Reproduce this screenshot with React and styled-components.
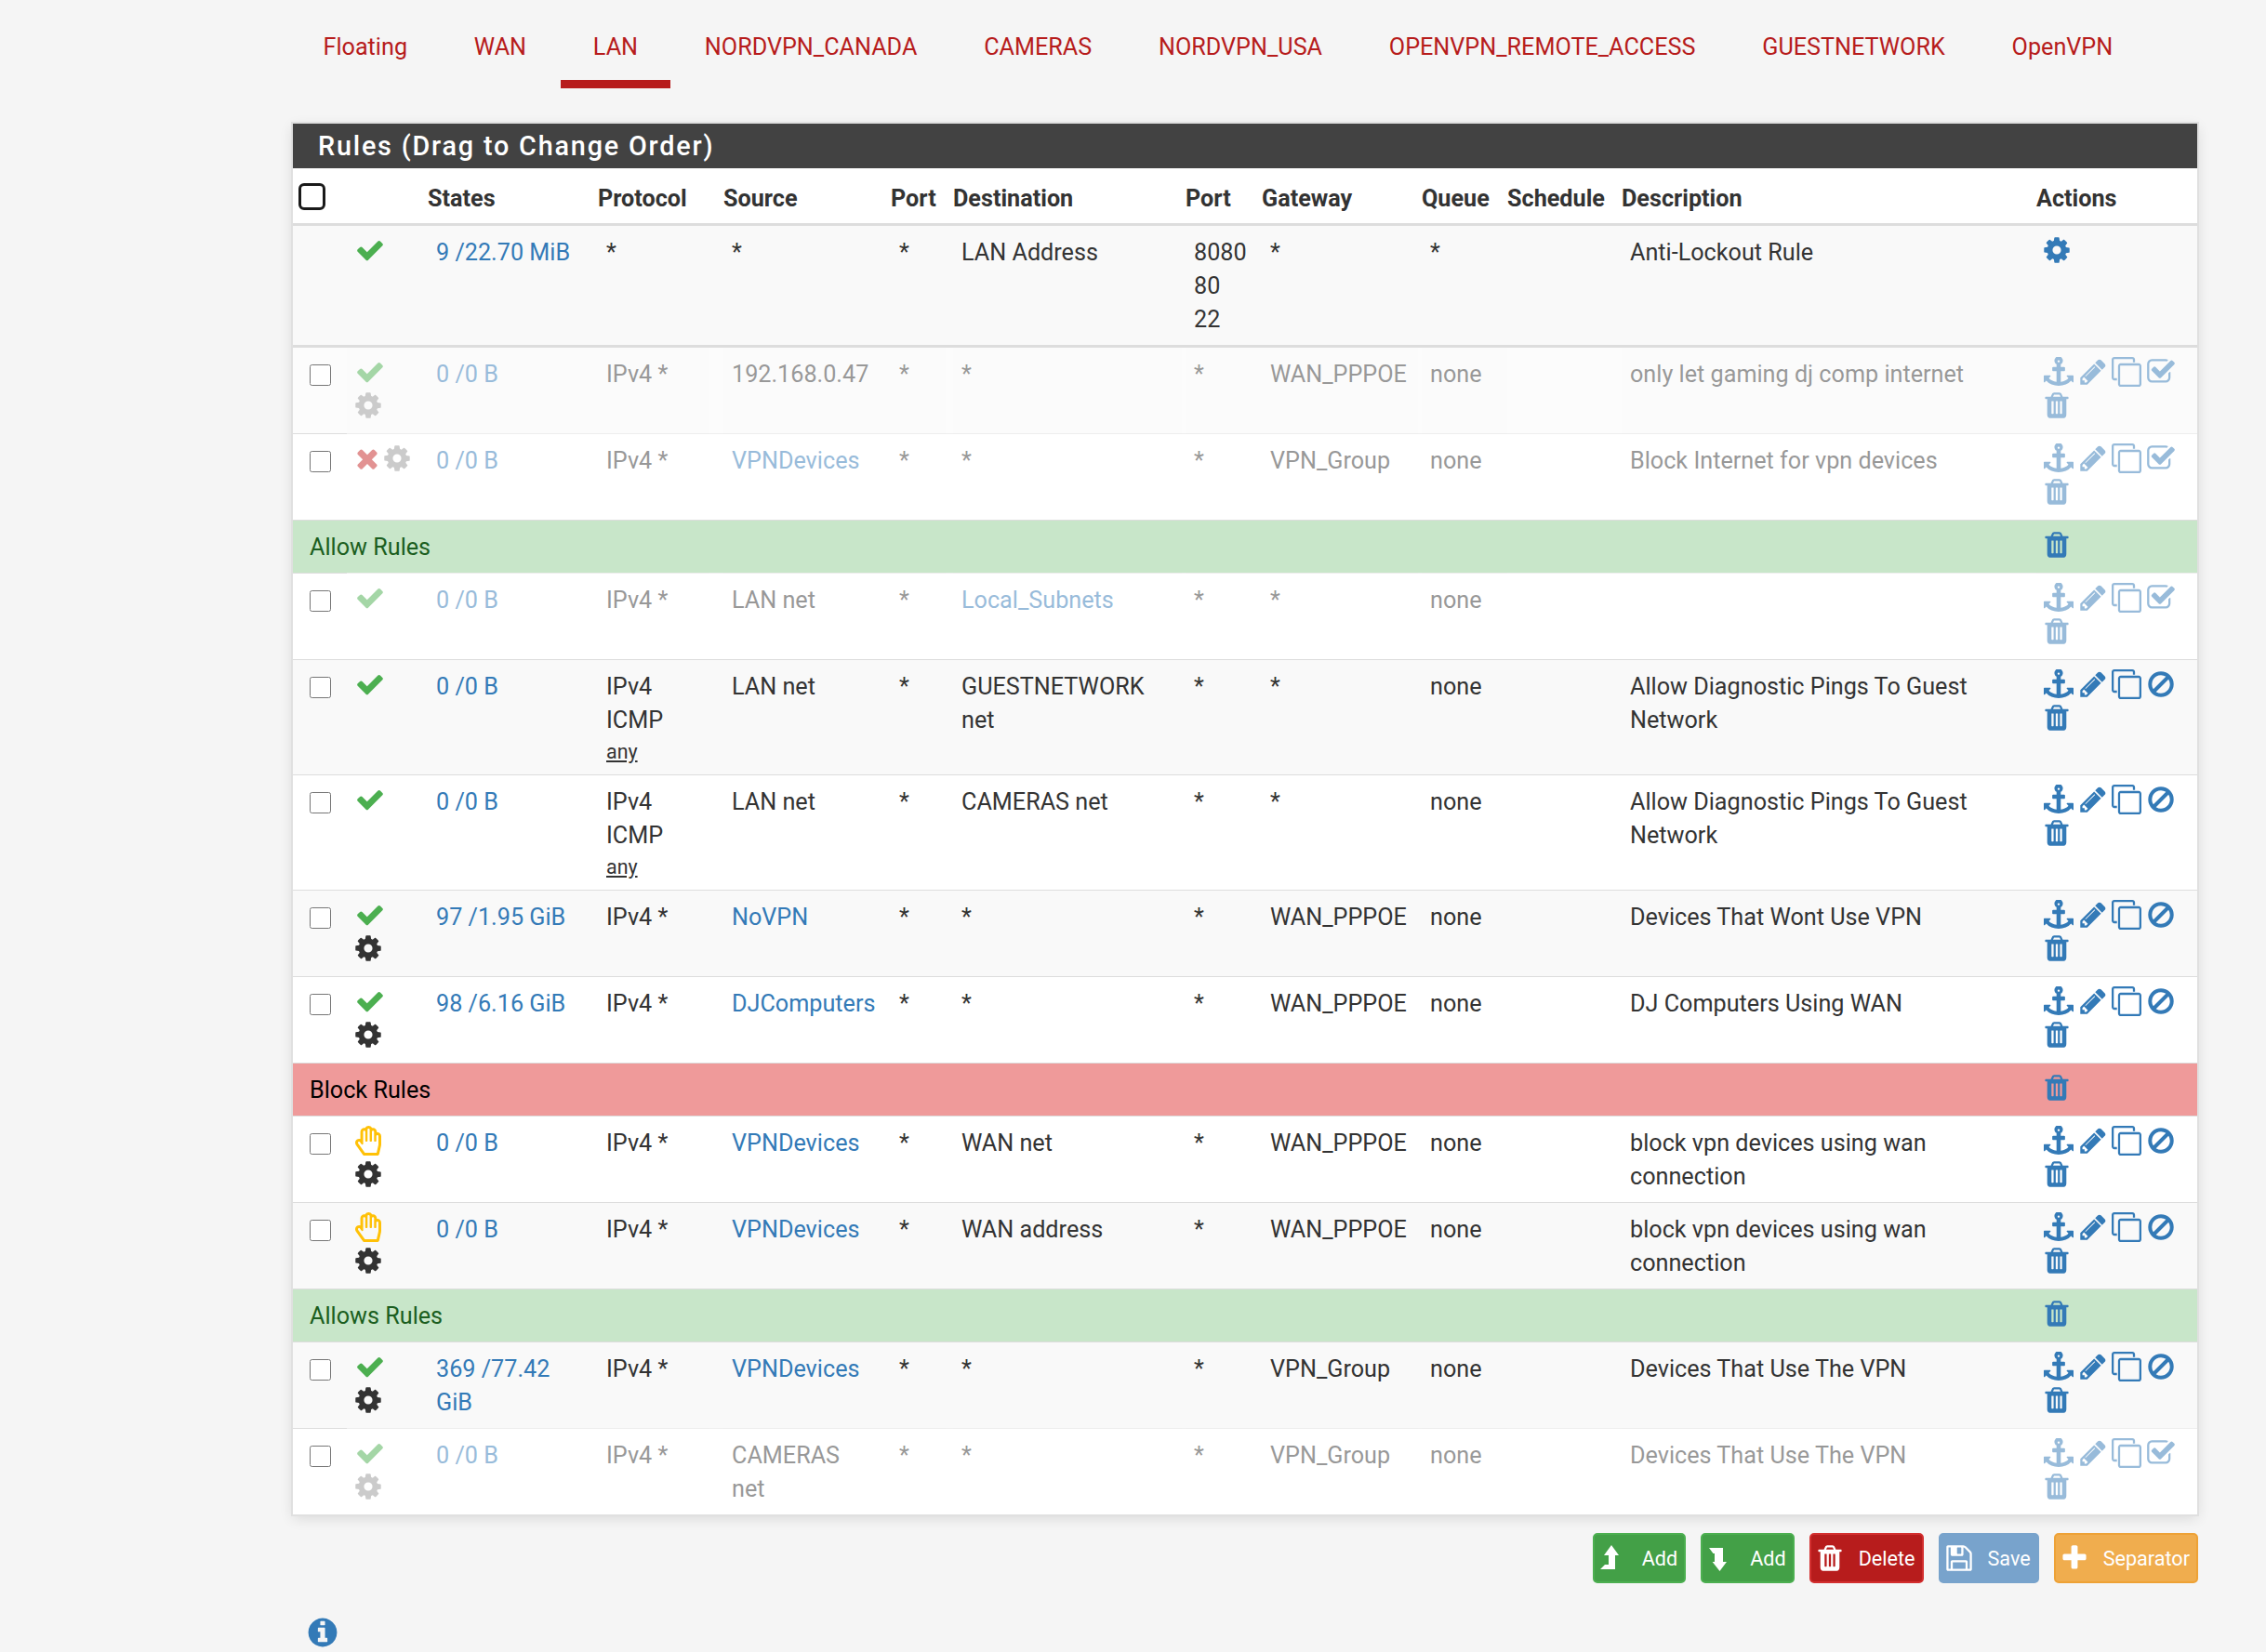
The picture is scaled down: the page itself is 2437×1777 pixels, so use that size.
import styled, { createGlobalStyle, css } from 'styled-components';
import { FaRegHandPaper } from 'react-icons/fa';

// Font Awesome 4 outlines, the ones the firewall page uses
const PATHS = {
  check: 'M1671 566q0 40-28 68l-724 724-136 136q-28 28-68 28t-68-28l-136-136-362-362q-28-28-28-68t28-68l136-136q28-28 68-28t68 28l294 295 656-657q28-28 68-28t68 28l136 136q28 28 28 68z',
  times: 'M1490 1322q0 40-28 68l-136 136q-28 28-68 28t-68-28l-294-294-294 294q-28 28-68 28t-68-28l-136-136q-28-28-28-68t28-68l294-294-294-294q-28-28-28-68t28-68l136-136q28-28 68-28t68 28l294 294 294-294q28-28 68-28t68 28l136 136q28 28 28 68t-28 68l-294 294 294 294q28 28 28 68z',
  cog: 'M1152 896q0-106-75-181t-181-75-181 75-75 181 75 181 181 75 181-75 75-181zm512-109v222q0 12-8 23t-20 13l-185 28q-19 54-39 91 35 50 107 138 10 12 10 25t-9 23q-27 37-99 108t-94 71q-12 0-26-9l-138-108q-44 23-91 38-16 136-29 186-7 28-36 28h-222q-14 0-24.5-8.5t-11.5-21.5l-28-184q-49-16-90-37l-141 107q-10 9-25 9-14 0-25-11-126-114-165-168-7-10-7-23 0-12 8-23 15-21 51-66.5t54-70.5q-27-50-41-99l-183-27q-13-2-21-12.5t-8-23.5v-222q0-12 8-23t19-13l186-28q14-46 39-92-40-57-107-138-10-12-10-24 0-10 9-23 26-36 98.5-107.5t94.5-71.5q13 0 26 10l138 107q44-23 91-38 16-136 29-186 7-28 36-28h222q14 0 24.5 8.5t11.5 21.5l28 184q49 16 90 37l142-107q9-9 24-9 13 0 25 10 129 119 165 170 7 8 7 22 0 12-8 23-15 21-51 66.5t-54 70.5q26 50 41 98l183 28q13 2 21 12.5t8 23.5z',
  trash: 'M704 1376v-704q0-14-9-23t-23-9h-64q-14 0-23 9t-9 23v704q0 14 9 23t23 9h64q14 0 23-9t9-23zm256 0v-704q0-14-9-23t-23-9h-64q-14 0-23 9t-9 23v704q0 14 9 23t23 9h64q14 0 23-9t9-23zm256 0v-704q0-14-9-23t-23-9h-64q-14 0-23 9t-9 23v704q0 14 9 23t23 9h64q14 0 23-9t9-23zm-544-992h448l-48-117q-7-9-17-11h-317q-10 2-17 11zm928 32v64q0 14-9 23t-23 9h-96v948q0 83-47 143.5t-113 60.5h-832q-66 0-113-58.5t-47-141.5v-952h-96q-14 0-23-9t-9-23v-64q0-14 9-23t23-9h309l70-167q15-37 54-63t79-26h320q40 0 79 26t54 63l70 167h309q14 0 23 9t9 23z',
  anchor: 'M960 256q0-26-19-45t-45-19-45 19-19 45 19 45 45 19 45-19 19-45zm832 888v352q0 22-20 30-8 2-12 2-12 0-23-9l-93-93q-119 143-318.5 226.5t-429.5 83.5-429.5-83.5-318.5-226.5l-93 93q-9 9-23 9-4 0-12-2-20-8-20-30v-352q0-14 9-23t23-9h352q22 0 30 20 8 19-7 35l-100 100q67 91 189.5 153.5t271.5 82.5v-647h-192q-26 0-45-19t-19-45v-128q0-26 19-45t45-19h192v-163q-58-34-93-92.5t-35-128.5q0-106 75-181t181-75 181 75 75 181q0 70-35 128.5t-93 92.5v163h192q26 0 45 19t19 45v128q0 26-19 45t-45 19h-192v647q149-20 271.5-82.5t189.5-153.5l-100-100q-15-16-7-35 8-20 30-20h352q14 0 23 9t9 23z',
  pencil: 'M491 1536l91-91-235-235-91 91v107h128v128h107zm523-928q0-22-22-22-10 0-17 7l-542 542q-7 7-7 17 0 22 22 22 10 0 17-7l542-542q7-7 7-17zm-54-192l416 416-832 832h-416v-416zm683 96q0 53-37 90l-166 166-416-416 166-165q36-38 90-38 53 0 91 38l235 234q37 39 37 91z',
  clone: 'M1664 1632v-1088q0-13-9.5-22.5t-22.5-9.5h-1088q-13 0-22.5 9.5t-9.5 22.5v1088q0 13 9.5 22.5t22.5 9.5h1088q13 0 22.5-9.5t9.5-22.5zm128-1088v1088q0 66-47 113t-113 47h-1088q-66 0-113-47t-47-113v-1088q0-66 47-113t113-47h1088q66 0 113 47t47 113zm-384-384v160h-128v-160q0-13-9.5-22.5t-22.5-9.5h-1088q-13 0-22.5 9.5t-9.5 22.5v1088q0 13 9.5 22.5t22.5 9.5h160v128h-160q-66 0-113-47t-47-113v-1088q0-66 47-113t113-47h1088q66 0 113 47t47 113z',
  enable: 'M1472 930v318q0 119-84.5 203.5t-203.5 84.5h-832q-119 0-203.5-84.5t-84.5-203.5v-832q0-119 84.5-203.5t203.5-84.5h832q63 0 117 25 15 7 18 23 3 17-9 29l-49 49q-10 10-23 10-3 0-9-2-23-6-45-6h-832q-66 0-113 47t-47 113v832q0 66 47 113t113 47h832q66 0 113-47t47-113v-254q0-13 9-22l64-64q10-10 23-10 6 0 12 3 20 8 20 29zm231-489l-814 814q-24 24-57 24t-57-24l-430-430q-24-24-24-57t24-57l110-110q24-24 57-24t57 24l263 263 647-647q24-24 57-24t57 24l110 110q24 24 24 57t-24 57z',
  ban: 'M1440 893q0-161-87-295l-754 753q137 89 297 89 111 0 211.5-43.5t173.5-116.5 116-174.5 43-212.5zm-999 299l755-754q-135-91-300-91-148 0-273 73t-198 199-73 274q0 162 89 299zm1223-299q0 157-61 300t-163.5 246-245 164-298.5 61-298.5-61-245-164-163.5-246-61-300 61-299.5 163.5-245.5 245-164 298.5-61 298.5 61 245 164 163.5 245.5 61 299.5z',
  save: 'M512 1536h768v-384h-768v384zm896 0h128v-896q0-14-10-38.5t-20-34.5l-281-281q-10-10-34-20t-39-10v416q0 40-28 68t-68 28h-576q-40 0-68-28t-28-68v-416h-128v1280h128v-416q0-40 28-68t68-28h832q40 0 68 28t28 68v416zm-384-928v-320q0-13-9.5-22.5t-22.5-9.5h-192q-13 0-22.5 9.5t-9.5 22.5v320q0 13 9.5 22.5t22.5 9.5h192q13 0 22.5-9.5t9.5-22.5zm640 32v928q0 40-28 68t-68 28h-1344q-40 0-68-28t-28-68v-1344q0-40 28-68t68-28h928q40 0 88 20t76 48l280 280q28 28 48 76t20 88z',
  plus: 'M1600 736v192q0 40-28 68t-68 28h-416v416q0 40-28 68t-68 28h-192q-40 0-68-28t-28-68v-416h-416q-40 0-68-28t-28-68v-192q0-40 28-68t68-28h416v-416q0-40 28-68t68-28h192q40 0 68 28t28 68v416h416q40 0 68 28t28 68z',
  info: 'M1152 1376v-160q0-14-9-23t-23-9h-96v-512q0-14-9-23t-23-9h-320q-14 0-23 9t-9 23v160q0 14 9 23t23 9h96v320h-96q-14 0-23 9t-9 23v160q0 14 9 23t23 9h448q14 0 23-9t9-23zm-128-896v-160q0-14-9-23t-23-9h-192q-14 0-23 9t-9 23v160q0 14 9 23t23 9h192q14 0 23-9t9-23zm640 416q0 209-103 385.5t-279.5 279.5-385.5 103-385.5-103-279.5-279.5-103-385.5 103-385.5 279.5-279.5 385.5-103 385.5 103 279.5 279.5 103 385.5z',
  levelUp: 'M784 112 L1232 728 H1008 V1568 H112 L392 1288 H616 V728 H336 Z',
  levelDown: 'M812 1680 L1230 1120 H1008 V280 H168 L420 616 H504 V1120 H370 Z',
};

function Icon({ name, className }) {
  return (
    <svg className={className} viewBox="0 0 1792 1792" width="32" height="32" aria-hidden="true">
      <path d={PATHS[name]} fill="currentColor" />
    </svg>
  );
}

const TABS = ['Floating', 'WAN', 'LAN', 'NORDVPN_CANADA', 'CAMERAS', 'NORDVPN_USA', 'OPENVPN_REMOTE_ACCESS', 'GUESTNETWORK', 'OpenVPN'];

const HEADINGS = ['', '', 'States', 'Protocol', 'Source', 'Port', 'Destination', 'Port', 'Gateway', 'Queue', 'Schedule', 'Description', 'Actions'];
const COL_WIDTHS = [58, 87, 183, 135, 180, 67, 250, 82, 172, 92, 123, 446, 173];

const ICMP = { icmp: true };

const RULES = [
  { off: true, status: 'check', gear: true, states: '0 /0 B', proto: 'IPv4 *', source: '192.168.0.47', dest: '*', gateway: 'WAN_PPPOE', desc: 'only let gaming dj comp internet' },
  { off: true, status: 'times', gear: true, states: '0 /0 B', proto: 'IPv4 *', source: 'VPNDevices', sourceLink: true, dest: '*', gateway: 'VPN_Group', desc: 'Block Internet for vpn devices' },
  { section: 'Allow Rules', tone: 'allow' },
  { off: true, status: 'check', states: '0 /0 B', proto: 'IPv4 *', source: 'LAN net', dest: 'Local_Subnets', destLink: true, gateway: '*', desc: '' },
  { ...ICMP, status: 'check', states: '0 /0 B', source: 'LAN net', dest: 'GUESTNETWORK net', gateway: '*', desc: 'Allow Diagnostic Pings To Guest Network' },
  { ...ICMP, status: 'check', states: '0 /0 B', source: 'LAN net', dest: 'CAMERAS net', gateway: '*', desc: 'Allow Diagnostic Pings To Guest Network' },
  { status: 'check', gear: true, states: '97 /1.95 GiB', proto: 'IPv4 *', source: 'NoVPN', sourceLink: true, dest: '*', gateway: 'WAN_PPPOE', desc: 'Devices That Wont Use VPN' },
  { status: 'check', gear: true, states: '98 /6.16 GiB', proto: 'IPv4 *', source: 'DJComputers', sourceLink: true, dest: '*', gateway: 'WAN_PPPOE', desc: 'DJ Computers Using WAN' },
  { section: 'Block Rules', tone: 'block' },
  { status: 'hand', gear: true, states: '0 /0 B', proto: 'IPv4 *', source: 'VPNDevices', sourceLink: true, dest: 'WAN net', gateway: 'WAN_PPPOE', desc: 'block vpn devices using wan connection' },
  { status: 'hand', gear: true, states: '0 /0 B', proto: 'IPv4 *', source: 'VPNDevices', sourceLink: true, dest: 'WAN address', gateway: 'WAN_PPPOE', desc: 'block vpn devices using wan connection' },
  { section: 'Allows Rules', tone: 'allow' },
  { status: 'check', gear: true, states: '369 /77.42 GiB', proto: 'IPv4 *', source: 'VPNDevices', sourceLink: true, dest: '*', gateway: 'VPN_Group', desc: 'Devices That Use The VPN' },
  { off: true, status: 'check', gear: true, states: '0 /0 B', proto: 'IPv4 *', source: 'CAMERAS net', dest: '*', gateway: 'VPN_Group', desc: 'Devices That Use The VPN' },
];

function StatusIcons({ rule }) {
  return (
    <IconFlow>
      {rule.status === 'check' && <CheckIcon name="check" />}
      {rule.status === 'times' && <TimesIcon name="times" />}
      {rule.status === 'hand' && <HandIcon />}
      {rule.gear && <GearIcon name="cog" $muted={rule.off} />}
    </IconFlow>
  );
}

function RuleActions({ off }) {
  return (
    <IconFlow>
      <ActionIcon name="anchor" />
      <ActionIcon name="pencil" />
      <ActionIcon name="clone" />
      <ActionIcon name={off ? 'enable' : 'ban'} />
      <NudgedIcon name="trash" />
    </IconFlow>
  );
}

function RuleRow({ rule }) {
  if (rule.section) {
    return (
      <Row>
        <SectionCell colSpan={12} $tone={rule.tone}>{rule.section}</SectionCell>
        <SectionCell $tone={rule.tone} $action>
          <IconFlow>
            <NudgedIcon name="trash" />
          </IconFlow>
        </SectionCell>
      </Row>
    );
  }
  return (
    <Row $off={rule.off}>
      <Cell>
        <RowCheck type="checkbox" />
      </Cell>
      <Cell><StatusIcons rule={rule} /></Cell>
      <Cell><TextLink href="#states">{rule.states}</TextLink></Cell>
      <Cell>
        {rule.icmp ? (
          <>
            IPv4<br />ICMP
            <IcmpType>any</IcmpType>
          </>
        ) : rule.proto}
      </Cell>
      <SourceCell>{rule.sourceLink ? <TextLink href="#source">{rule.source}</TextLink> : rule.source}</SourceCell>
      <Cell>*</Cell>
      <Cell>{rule.destLink ? <TextLink href="#dest">{rule.dest}</TextLink> : rule.dest}</Cell>
      <Cell>*</Cell>
      <Cell>{rule.gateway}</Cell>
      <Cell>none</Cell>
      <Cell />
      <Cell>{rule.desc}</Cell>
      <ActionCell><RuleActions off={rule.off} /></ActionCell>
    </Row>
  );
}

export default function App() {
  return (
    <>
      <GlobalStyle />
      <TabList>
        {TABS.map((tab) => (
          <Tab key={tab} $active={tab === 'LAN'}>
            <TabLink href="#tab">{tab}</TabLink>
          </Tab>
        ))}
      </TabList>
      <Main>
        <Panel>
          <PanelHeading>Rules (Drag to Change Order)</PanelHeading>
          <RulesTable>
            <colgroup>
              {COL_WIDTHS.map((w, i) => <col key={i} width={w} />)}
            </colgroup>
            <thead>
              <tr>
                <HeadCell><HeadCheck type="checkbox" /></HeadCell>
                {HEADINGS.slice(1).map((h, i) => <HeadCell key={i}>{h}</HeadCell>)}
              </tr>
            </thead>
            <tbody>
              <LockoutRow>
                <Cell />
                <Cell><IconFlow><CheckIcon name="check" /></IconFlow></Cell>
                <Cell><TextLink href="#states">9 /22.70 MiB</TextLink></Cell>
                <Cell>*</Cell>
                <Cell>*</Cell>
                <Cell>*</Cell>
                <Cell>LAN Address</Cell>
                <Cell>8080<br />80<br />22</Cell>
                <Cell>*</Cell>
                <Cell>*</Cell>
                <Cell />
                <Cell>Anti-Lockout Rule</Cell>
                <ActionCell><IconFlow><NudgedIcon name="cog" /></IconFlow></ActionCell>
              </LockoutRow>
            </tbody>
            <RuleBody>
              {RULES.map((rule, i) => <RuleRow key={i} rule={rule} />)}
            </RuleBody>
          </RulesTable>
        </Panel>
        <ButtonBar>
          <Button $tone="green"><Icon name="levelUp" />Add</Button>
          <Button $tone="green"><Icon name="levelDown" />Add</Button>
          <Button $tone="red"><Icon name="trash" />Delete</Button>
          <Button $tone="blue"><Icon name="save" />Save</Button>
          <Button $tone="orange"><Icon name="plus" />Separator</Button>
        </ButtonBar>
        <InfoIcon name="info" />
      </Main>
    </>
  );
}

const GlobalStyle = createGlobalStyle`
  body {
    margin: 0;
    background: #f5f5f5;
    color: #333;
    font-family: Roboto, "Liberation Sans", sans-serif;
    font-size: 25.2px;
    line-height: 36px;
  }
`;

const TabList = styled.ul`
  display: flex;
  list-style: none;
  margin: 0;
  padding: 0 0 0 313px;
`;

const Tab = styled.li`
  padding: 33px 34.5px 17px;
  margin-right: 2.8px;
  border-bottom: 9px solid ${(p) => (p.$active ? '#b71c1c' : 'transparent')};
`;

const TabLink = styled.a`
  color: #b71c1c;
  text-decoration: none;
`;

const Main = styled.main`
  padding: 38px 72px 0 315px;
`;

const Panel = styled.section`
  margin-right: 2px;
  background: #fff;
  box-shadow: 0 0 0 2px #e0e0e0, 0 4px 14px rgba(0, 0, 0, 0.12);
`;

const PanelHeading = styled.h2`
  display: flex;
  align-items: center;
  height: 48px;
  margin: 0 0 2px;
  padding-left: 27px;
  background: #424242;
  color: #fff;
  font-size: 28.8px;
  font-weight: 500;
  letter-spacing: 1.8px;
`;

const RulesTable = styled.table`
  width: 2048px;
  table-layout: fixed;
  border-collapse: separate;
  border-spacing: 0;
  background: #fff;
`;

const HeadCell = styled.th`
  height: 53px;
  padding: 4px 0 0;
  border-bottom: 3px solid #ddd;
  text-align: left;
  font-weight: 700;
  white-space: nowrap;
`;

const HeadCheck = styled.input`
  appearance: none;
  display: block;
  width: 29px;
  height: 29px;
  margin: -4px 0 0 6px;
  background: #fff;
  border: 3px solid #1a1a1a;
  border-radius: 6px;
`;

const Cell = styled.td`
  padding: 11px 9px 9px;
  vertical-align: top;
`;

const SourceCell = styled(Cell)`
  padding-right: 14px;
`;

const ActionCell = styled(Cell)`
  padding-left: 8px;
`;

const LockoutRow = styled.tr`
  td {
    background: #f9f9f9;
    border-bottom: 3px solid #ddd;
  }
`;

const RuleBody = styled.tbody`
  tr:nth-child(odd) td {
    background: #f9f9f9;
  }
  tr:first-child td {
    border-top: 0;
  }
`;

const Row = styled.tr`
  td {
    border-top: 1px solid #ddd;
  }
  ${(p) => p.$off && css`
    td {
      opacity: 0.5;
    }
    td:first-child {
      opacity: 1;
    }
    &:nth-child(odd) td:first-child {
      background: #fcfcfc;
    }
  `}
`;

const TONES = {
  allow: css`
    background: #c8e6c9 !important;
    color: #1b5e20;
  `,
  block: css`
    background: #ef9a9a !important;
    color: #000;
  `,
};

const SectionCell = styled.td`
  padding: 11px ${(p) => (p.$action ? '9px' : '18px')} 9px ${(p) => (p.$action ? '8px' : '18px')};
  vertical-align: top;
  ${(p) => TONES[p.$tone]}
`;

const RowCheck = styled.input`
  display: block;
  width: 23px;
  height: 23px;
  margin: 7px 0 0 9px;
`;

const TextLink = styled.a`
  color: #337ab7;
  text-decoration: none;
`;

const IcmpType = styled.span`
  display: block;
  font-size: 21.4px;
  line-height: 31px;
  text-decoration: underline;
`;

const IconFlow = styled.div`
  display: flex;
  flex-wrap: wrap;
  gap: 4px 4.7px;
  margin-top: -1px;
  padding-bottom: 5px;
`;

const CheckIcon = styled(Icon)`
  margin-right: 6px;
  color: #4caf50;
`;

const TimesIcon = styled(Icon)`
  margin: 0 -3px 0 -3px;
  color: #c62828;
`;

const HandIcon = styled(FaRegHandPaper)`
  width: 28px;
  height: 32px;
  margin-right: 10px;
  color: #ffc107;
`;

const GearIcon = styled(Icon)`
  margin-left: -2px;
  color: ${(p) => (p.$muted ? '#999' : '#333')};
`;

const ActionIcon = styled(Icon)`
  display: block;
  color: #337ab7;
`;

const NudgedIcon = styled(ActionIcon)`
  margin-left: -2px;
`;

const ButtonBar = styled.div`
  display: flex;
  justify-content: flex-end;
  gap: 16px;
  margin: 20px 1px 0 0;
`;

const BUTTONS = {
  green: css`
    background: #43a047;
    border-color: #4caf50;
  `,
  red: css`
    background: #b71c1c;
    border-color: #d32f2f;
  `,
  blue: css`
    background: #78a3cc;
    border-color: #78a3cc;
  `,
  orange: css`
    background: #f0ad4e;
    border-color: #eea236;
  `,
};

const Button = styled.button`
  display: flex;
  align-items: center;
  gap: 15px;
  height: 54px;
  padding: 0 7px 0 4px;
  border: 2px solid;
  border-radius: 5px;
  color: #fff;
  font-family: inherit;
  font-size: 21.6px;
  ${(p) => BUTTONS[p.$tone]}
`;

const InfoIcon = styled(Icon)`
  display: block;
  width: 36px;
  height: 36px;
  margin: 35px 0 0 14px;
  color: #337ab7;
`;
